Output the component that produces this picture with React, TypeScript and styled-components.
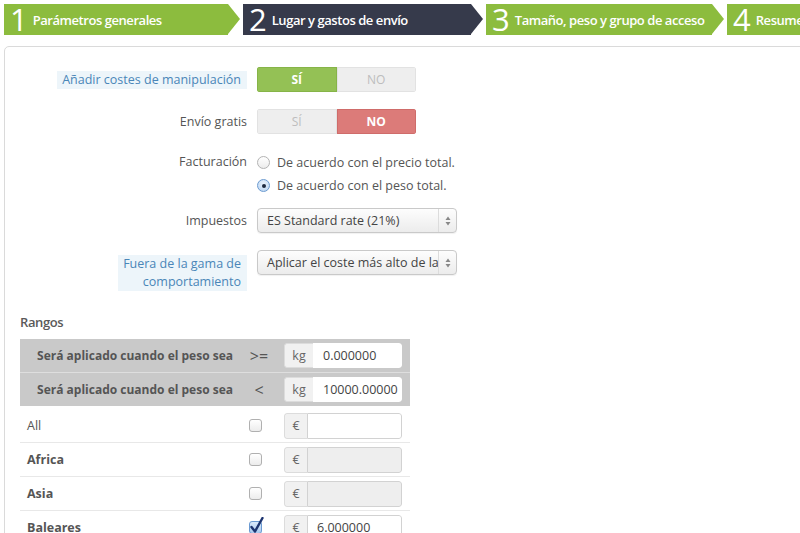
import React from "react";
import styled, { createGlobalStyle, css } from "styled-components";

const Global = createGlobalStyle`
  html, body { margin: 0; padding: 0; background: #fff; overflow: hidden; }
  body { font-family: "Open Sans", "DejaVu Sans", sans-serif; color: #555; }
  * { box-sizing: border-box; }
`;

const Page = styled.div`
  width: 800px;
  height: 533px;
  overflow: hidden;
  padding: 4px 0 0 4px;
`;

const Wizard = styled.div`
  display: flex;
  gap: 15px;
  height: 31px;
  width: 900px;
`;

const Step = styled.div<{ $active?: boolean; $w: number }>`
  position: relative;
  flex: 0 0 ${(p) => p.$w}px;
  height: 31px;
  display: flex;
  align-items: center;
  gap: 5px;
  padding-left: 6px;
  background: ${(p) => (p.$active ? "#363a4b" : "#8cbc3e")};
  color: #fff;
  &::after {
    content: "";
    position: absolute;
    right: -12px;
    top: 0;
    border-top: 15.5px solid transparent;
    border-bottom: 15.5px solid transparent;
    border-left: 12px solid ${(p) => (p.$active ? "#363a4b" : "#8cbc3e")};
  }
`;

const StepNum = styled.span`
  display: block;
  height: 31px;
  font-size: 31px;
  font-weight: 400;
  line-height: 31px;
`;

const StepText = styled.span`
  font-size: 13px;
  font-weight: 600;
  letter-spacing: -0.45px;
  white-space: nowrap;
`;

const Panel = styled.div`
  margin-top: 11px;
  width: 830px;
  height: 600px;
  border: 1px solid #dadada;
  border-radius: 5px;
  padding: 20px 0 0 15px;
`;

const FormRow = styled.div<{ $top?: boolean; $mb?: number }>`
  display: grid;
  grid-template-columns: 227px 1fr;
  column-gap: 10px;
  align-items: ${(p) => (p.$top ? "start" : "center")};
  margin-bottom: ${(p) => (p.$mb ?? 17)}px;
`;

const Label = styled.div<{ $pt?: number }>`
  text-align: right;
  font-size: 12.5px;
  line-height: 18px;
  color: #555;
  padding-top: ${(p) => p.$pt ?? 0}px;
`;

const Hint = styled.span`
  display: inline-block;
  background: #edf5fa;
  color: #4a86b8;
  padding: 0 6px 0 5px;
  text-align: right;
`;

const Toggle = styled.div`
  display: flex;
  width: 159px;
  height: 25px;
  border-radius: 3px;
  overflow: hidden;
`;

const ToggleHalf = styled.div<{ $on?: "yes" | "no" }>`
  flex: 1;
  display: flex;
  align-items: center;
  justify-content: center;
  font-size: 12px;
  ${(p) =>
    p.$on === "yes"
      ? css`background: #94c155; color: #fff; font-weight: 700; border: 1px solid #86b448;`
      : p.$on === "no"
      ? css`background: #dc7b79; color: #fff; font-weight: 700; border: 1px solid #cf6c6a;`
      : css`background: #eeeeee; color: #bdbdbd; border: 1px solid #e2e2e2;`}
`;

const RadioList = styled.div`
  display: flex;
  flex-direction: column;
`;

const RadioOption = styled.div`
  display: flex;
  align-items: center;
  gap: 7px;
  height: 23px;
  font-size: 12.5px;
  color: #555;
`;

const RadioDot = styled.span<{ $checked?: boolean }>`
  width: 13px;
  height: 13px;
  border-radius: 50%;
  display: inline-flex;
  align-items: center;
  justify-content: center;
  ${(p) =>
    p.$checked
      ? css`
          border: 1px solid #6c9bd0;
          background: radial-gradient(circle at 50% 35%, #eaf3fd, #b7d3f2);
          &::after { content: ""; width: 4px; height: 4px; border-radius: 50%; background: #1d2a40; }
        `
      : css`
          border: 1px solid #b3b3b3;
          background: linear-gradient(#fff, #ececec);
        `}
`;

const Select = styled.div`
  width: 200px;
  height: 25px;
  border: 1px solid #c9c9c9;
  border-radius: 4px;
  background: linear-gradient(#fdfdfd, #ececec);
  display: flex;
  align-items: center;
  box-shadow: 0 1px 1px rgba(0, 0, 0, 0.06);
`;

const SelectText = styled.span`
  flex: 1;
  padding-left: 9px;
  font-size: 12.5px;
  color: #444;
  white-space: nowrap;
  overflow: hidden;
`;

const SelectArrows = styled.span`
  width: 18px;
  height: 23px;
  border-left: 1px solid #dcdcdc;
  display: flex;
  align-items: center;
  justify-content: center;
`;

const SectionTitle = styled.div`
  font-size: 13px;
  font-weight: 600;
  letter-spacing: -0.4px;
  line-height: 18px;
  color: #5a5a5a;
  margin-top: 22px;
  margin-bottom: 8px;
`;

const RangeTable = styled.div`
  width: 390px;
  display: flex;
  flex-direction: column;
`;

const HeadRow = styled.div`
  display: grid;
  grid-template-columns: 220px 36px 1fr;
  align-items: center;
  height: 33px;
  background: #c9c9c9;
  & + & { border-top: 1px solid #dedede; height: 34px; }
`;

const HeadLabel = styled.div`
  text-align: right;
  padding-right: 7px;
  font-size: 12px;
  font-weight: 700;
  color: #555;
  white-space: nowrap;
`;

const Operator = styled.div`
  text-align: center;
  font-size: 16px;
  color: #555;
  padding-left: 2px;
`;

const InputCell = styled.div<{ $pl: number }>`
  padding: 0 8px 0 ${(p) => p.$pl}px;
`;

const InputGroup = styled.div<{ $h: number }>`
  display: flex;
  height: ${(p) => p.$h}px;
  border-radius: 3px;
  overflow: hidden;
`;

const Addon = styled.div<{ $w: number }>`
  flex: 0 0 ${(p) => p.$w}px;
  background: #f1f1f1;
  border: 1px solid #dcdcdc;
  border-right: none;
  border-radius: 3px 0 0 3px;
  display: flex;
  align-items: center;
  justify-content: center;
  font-size: 12.5px;
  color: #666;
`;

const Field = styled.div<{ $disabled?: boolean; $bordered?: boolean }>`
  flex: 1;
  background: ${(p) => (p.$disabled ? "#eeeeee" : "#fff")};
  border: 1px solid ${(p) => (p.$bordered ? "#d2d2d2" : "transparent")};
  border-radius: 0 3px 3px 0;
  display: flex;
  align-items: center;
  padding-left: 9px;
  font-size: 12.5px;
  color: #444;
`;

const DataRow = styled.div`
  display: grid;
  grid-template-columns: 220px 36px 1fr;
  align-items: center;
  height: 34px;
  border-bottom: 1px solid #e8e8e8;
  ${HeadRow} + & { margin-top: 3px; }
`;

const ZoneName = styled.div<{ $bold?: boolean }>`
  padding-left: 7px;
  font-size: 12.5px;
  font-weight: ${(p) => (p.$bold ? 700 : 400)};
  color: #555;
`;

const CheckCell = styled.div`
  display: flex;
  justify-content: center;
  padding-right: 5px;
`;

const Box = styled.span<{ $checked?: boolean }>`
  position: relative;
  width: 13px;
  height: 13px;
  border-radius: 3px;
  border: 1px solid ${(p) => (p.$checked ? "#6a9ad2" : "#b0b0b0")};
  background: ${(p) => (p.$checked ? "linear-gradient(#d9e9fb, #a9c9ef)" : "linear-gradient(#fff, #ececec)")};
`;

const CheckMark = styled.svg`
  position: absolute;
  left: 0px;
  top: -5px;
`;

const Arrows = () => (
  <svg width="6" height="10" viewBox="0 0 6 10">
    <path d="M3 0.5 L5.5 4 L0.5 4 Z" fill="#888" />
    <path d="M3 9.5 L5.5 6 L0.5 6 Z" fill="#888" />
  </svg>
);

const Checkbox = ({ checked }: { checked?: boolean }) => (
  <Box $checked={checked}>
    {checked && (
      <CheckMark width="14" height="17" viewBox="0 0 14 17">
        <path d="M1.5 10 L5 14.5 L12.5 1" stroke="#1c3470" strokeWidth="2.4" fill="none" strokeLinecap="round" strokeLinejoin="round" />
      </CheckMark>
    )}
  </Box>
);

const zones = [
  { name: "All", bold: false, checked: false, value: "", disabled: false },
  { name: "Africa", bold: true, checked: false, value: "", disabled: true },
  { name: "Asia", bold: true, checked: false, value: "", disabled: true },
  { name: "Baleares", bold: true, checked: true, value: "6.000000", disabled: false },
];

export default function App() {
  return (
    <Page>
      <Global />
      <Wizard>
        <Step $w={224}>
          <StepNum>1</StepNum>
          <StepText>Parámetros generales</StepText>
        </Step>
        <Step $w={228} $active>
          <StepNum>2</StepNum>
          <StepText>Lugar y gastos de envío</StepText>
        </Step>
        <Step $w={226}>
          <StepNum>3</StepNum>
          <StepText>Tamaño, peso y grupo de acceso</StepText>
        </Step>
        <Step $w={200}>
          <StepNum>4</StepNum>
          <StepText>Resumen</StepText>
        </Step>
      </Wizard>
      <Panel>
        <FormRow>
          <Label>
            <Hint>Añadir costes de manipulación</Hint>
          </Label>
          <Toggle>
            <ToggleHalf $on="yes">SÍ</ToggleHalf>
            <ToggleHalf>NO</ToggleHalf>
          </Toggle>
        </FormRow>
        <FormRow>
          <Label>Envío gratis</Label>
          <Toggle>
            <ToggleHalf>SÍ</ToggleHalf>
            <ToggleHalf $on="no">NO</ToggleHalf>
          </Toggle>
        </FormRow>
        <FormRow $top $mb={11}>
          <Label $pt={2}>Facturación</Label>
          <RadioList>
            <RadioOption>
              <RadioDot />
              De acuerdo con el precio total.
            </RadioOption>
            <RadioOption>
              <RadioDot $checked />
              De acuerdo con el peso total.
            </RadioOption>
          </RadioList>
        </FormRow>
        <FormRow>
          <Label>Impuestos</Label>
          <Select>
            <SelectText>ES Standard rate (21%)</SelectText>
            <SelectArrows>
              <Arrows />
            </SelectArrows>
          </Select>
        </FormRow>
        <FormRow $top $mb={0}>
          <Label $pt={5}>
            <Hint>
              Fuera de la gama de
              <br />
              comportamiento
            </Hint>
          </Label>
          <Select>
            <SelectText>Aplicar el coste más alto de la</SelectText>
            <SelectArrows>
              <Arrows />
            </SelectArrows>
          </Select>
        </FormRow>

        <SectionTitle>Rangos</SectionTitle>
        <RangeTable>
          <HeadRow>
            <HeadLabel>Será aplicado cuando el peso sea</HeadLabel>
            <Operator>&gt;=</Operator>
            <InputCell $pl={8}>
              <InputGroup $h={25}>
                <Addon $w={29}>kg</Addon>
                <Field>0.000000</Field>
              </InputGroup>
            </InputCell>
          </HeadRow>
          <HeadRow>
            <HeadLabel>Será aplicado cuando el peso sea</HeadLabel>
            <Operator>&lt;</Operator>
            <InputCell $pl={8}>
              <InputGroup $h={25}>
                <Addon $w={29}>kg</Addon>
                <Field>10000.00000</Field>
              </InputGroup>
            </InputCell>
          </HeadRow>
          {zones.map((z) => (
            <DataRow key={z.name}>
              <ZoneName $bold={z.bold}>{z.name}</ZoneName>
              <CheckCell>
                <Checkbox checked={z.checked} />
              </CheckCell>
              <InputCell $pl={8}>
                <InputGroup $h={26}>
                  <Addon $w={23}>€</Addon>
                  <Field $disabled={z.disabled} $bordered>
                    {z.value}
                  </Field>
                </InputGroup>
              </InputCell>
            </DataRow>
          ))}
        </RangeTable>
      </Panel>
    </Page>
  );
}
